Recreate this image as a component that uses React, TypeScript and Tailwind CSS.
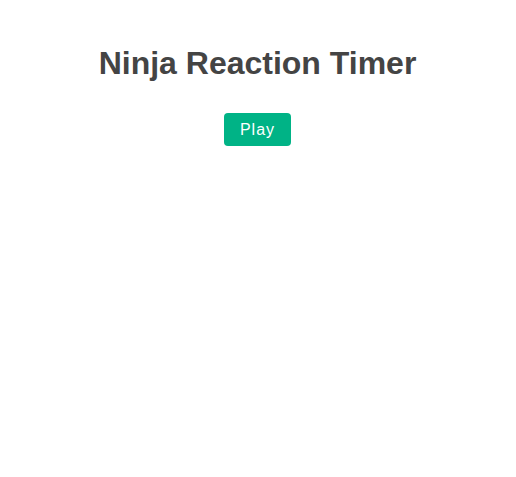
export default function App() {
  return (
    <div className="flex flex-col items-center text-center text-[#444] pt-[45px] pr-[1px]" style={{ fontFamily: '"Liberation Sans", Arial, sans-serif' }}>
      <h1 className="text-[32px] font-bold leading-[37px]">Ninja Reaction Timer</h1>
      <button className="mt-[31px] h-[33px] px-4 rounded bg-[#00b386] text-white text-base tracking-[1px] leading-[18px]">
        Play
      </button>
    </div>
  );
}
